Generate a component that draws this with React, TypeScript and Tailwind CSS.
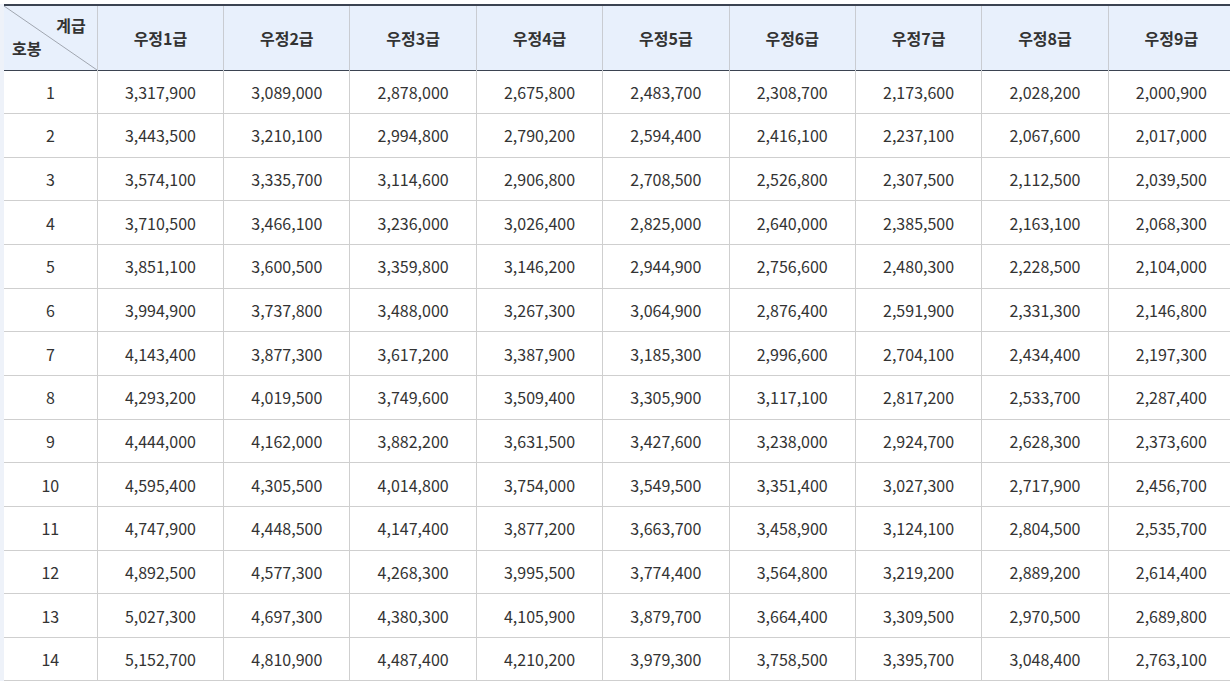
import React from "react";

const grades = ["우정1급", "우정2급", "우정3급", "우정4급", "우정5급", "우정6급", "우정7급", "우정8급", "우정9급"];

const rows: string[][] = [
  ["3,317,900", "3,089,000", "2,878,000", "2,675,800", "2,483,700", "2,308,700", "2,173,600", "2,028,200", "2,000,900"],
  ["3,443,500", "3,210,100", "2,994,800", "2,790,200", "2,594,400", "2,416,100", "2,237,100", "2,067,600", "2,017,000"],
  ["3,574,100", "3,335,700", "3,114,600", "2,906,800", "2,708,500", "2,526,800", "2,307,500", "2,112,500", "2,039,500"],
  ["3,710,500", "3,466,100", "3,236,000", "3,026,400", "2,825,000", "2,640,000", "2,385,500", "2,163,100", "2,068,300"],
  ["3,851,100", "3,600,500", "3,359,800", "3,146,200", "2,944,900", "2,756,600", "2,480,300", "2,228,500", "2,104,000"],
  ["3,994,900", "3,737,800", "3,488,000", "3,267,300", "3,064,900", "2,876,400", "2,591,900", "2,331,300", "2,146,800"],
  ["4,143,400", "3,877,300", "3,617,200", "3,387,900", "3,185,300", "2,996,600", "2,704,100", "2,434,400", "2,197,300"],
  ["4,293,200", "4,019,500", "3,749,600", "3,509,400", "3,305,900", "3,117,100", "2,817,200", "2,533,700", "2,287,400"],
  ["4,444,000", "4,162,000", "3,882,200", "3,631,500", "3,427,600", "3,238,000", "2,924,700", "2,628,300", "2,373,600"],
  ["4,595,400", "4,305,500", "4,014,800", "3,754,000", "3,549,500", "3,351,400", "3,027,300", "2,717,900", "2,456,700"],
  ["4,747,900", "4,448,500", "4,147,400", "3,877,200", "3,663,700", "3,458,900", "3,124,100", "2,804,500", "2,535,700"],
  ["4,892,500", "4,577,300", "4,268,300", "3,995,500", "3,774,400", "3,564,800", "3,219,200", "2,889,200", "2,614,400"],
  ["5,027,300", "4,697,300", "4,380,300", "4,105,900", "3,879,700", "3,664,400", "3,309,500", "2,970,500", "2,689,800"],
  ["5,152,700", "4,810,900", "4,487,400", "4,210,200", "3,979,300", "3,758,500", "3,395,700", "3,048,400", "2,763,100"],
];

export default function App() {
  return (
    <div
      className="w-[1230px] h-[682px] overflow-hidden bg-white text-[#333]"
      style={{ fontFamily: '"Noto Sans CJK KR", "Noto Sans", sans-serif' }}
    >
      <div className="h-[4px] overflow-hidden relative">
        <div className="absolute right-[60px] top-[-16px] text-[13px] leading-[18px] text-[#555]">(단위 : 원)</div>
      </div>
      <div className="flex">
        <div className="w-[4px] shrink-0 bg-[#eef2f9]" />
        <table className="table-fixed border-collapse w-[1231px] shrink-0">
          <colgroup>
            <col className="w-[93px]" />
            {grades.map((g) => (
              <col key={g} className="w-[126px]" />
            ))}
          </colgroup>
          <thead>
            <tr className="h-[65px] bg-[#e8f0fc] border-t-2 border-t-[#3b4351] border-b border-b-[#3b4351]">
              <th className="relative p-0 border-r border-r-[#c9ccd2]">
                <svg className="absolute inset-0" width="93" height="64" viewBox="0 0 93 64" preserveAspectRatio="none">
                  <line x1="0" y1="0" x2="93" y2="64" stroke="#a0a6b0" strokeWidth="1" />
                </svg>
                <span className="absolute right-[11px] top-[9px] text-[16px] font-bold leading-[20px]">계급</span>
                <span className="absolute left-[8px] top-[32px] text-[16px] font-bold leading-[20px]">호봉</span>
              </th>
              {grades.map((g) => (
                <th key={g} className="p-0 text-center text-[16px] font-bold border-r border-r-[#c9ccd2]">
                  {g}
                </th>
              ))}
            </tr>
          </thead>
          <tbody>
            {rows.map((r, i) => (
              <tr key={i} className="h-[43.65px] border-b border-b-[#cfcfcf]">
                <td className="p-0 text-center text-[16px] border-r border-r-[#cfcfcf]">{i + 1}</td>
                {r.map((v, j) => (
                  <td key={j} className="p-0 text-center text-[16px] border-r border-r-[#cfcfcf]">
                    {v}
                  </td>
                ))}
              </tr>
            ))}
          </tbody>
        </table>
      </div>
    </div>
  );
}
